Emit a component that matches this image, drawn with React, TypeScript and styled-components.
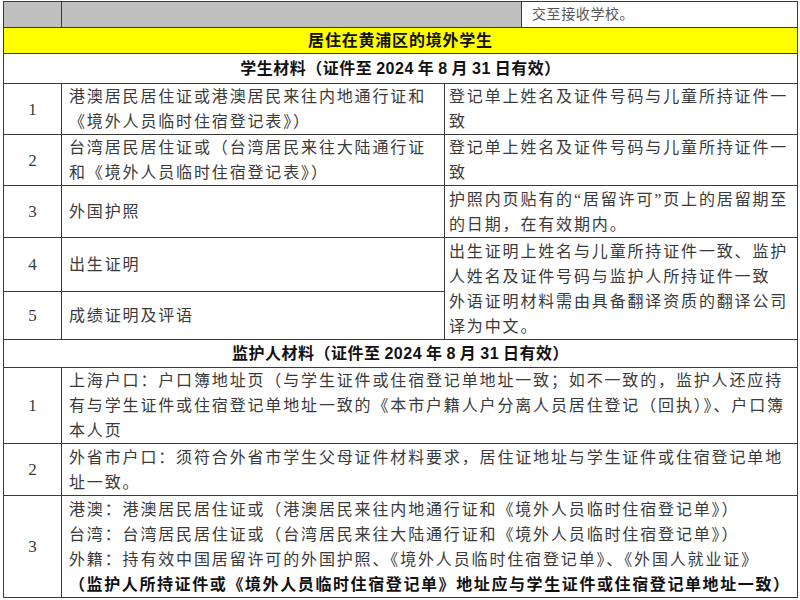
import React from "react";
import styled, { createGlobalStyle } from "styled-components";

const GlobalStyle = createGlobalStyle`
  html, body { margin: 0; padding: 0; background: #ffffff; }
  body { font-family: "Liberation Serif", "Noto Sans CJK SC", serif; }
`;

const Table = styled.table`
  border-collapse: collapse;
  table-layout: fixed;
  width: 794px;
  margin: 1px 0 0 3px;
  font-family: "Liberation Serif", "Noto Sans CJK SC", serif;
  font-size: 16px;
  color: #3a3a3a;
`;

const Row = styled.tr<{ $h: number }>`
  height: ${(p) => p.$h}px;
`;

const Cell = styled.td<{ $bg?: string; $pad?: string; $align?: string; $valign?: string }>`
  border: 1px solid #3a3a3a;
  background: ${(p) => p.$bg ?? "#ffffff"};
  padding: ${(p) => p.$pad ?? "0 4px 0 7px"};
  text-align: ${(p) => p.$align ?? "left"};
  vertical-align: ${(p) => p.$valign ?? "middle"};
  line-height: 25px;
  letter-spacing: 1.85px;
  white-space: nowrap;
  overflow: hidden;
`;

const NumCell = styled(Cell)`
  text-align: center;
  padding: 0;
  font-size: 17px;
  letter-spacing: 0;
`;

const NoteCell = styled(Cell)`
  font-size: 14px;
  letter-spacing: 0.6px;
  color: #555555;
  padding-left: 10px;
`;

const Heading = styled(Cell)<{ $yellow?: boolean }>`
  background: ${(p) => (p.$yellow ? "#ffff00" : "#ffffff")};
  text-align: center;
  font-family: "Liberation Sans", "Noto Sans CJK SC", sans-serif;
  font-weight: 700;
  color: #111111;
  letter-spacing: ${(p) => (p.$yellow ? "0.8px" : "0.5px")};
  word-spacing: ${(p) => (p.$yellow ? "0" : "-1px")};
  padding: 0;
`;

const Strong = styled.span`
  font-weight: 700;
  color: #111111;
  font-family: "Liberation Sans", "Noto Sans CJK SC", sans-serif;
  letter-spacing: 1.6px;
`;

const Lines = ({ lines }: { lines: string[] }) => (
  <>
    {lines.map((l, i) => (
      <React.Fragment key={i}>
        {i > 0 && <br />}
        {l}
      </React.Fragment>
    ))}
  </>
);

export default function App() {
  return (
    <>
      <GlobalStyle />
      <Table>
        <colgroup>
          <col style={{ width: 58 }} />
          <col style={{ width: 383 }} />
          <col style={{ width: 77 }} />
          <col style={{ width: 276 }} />
        </colgroup>
        <tbody>
          <Row $h={26}>
            <Cell $bg="#c0c0c0" />
            <Cell $bg="#c0c0c0" colSpan={2} />
            <NoteCell>交至接收学校。</NoteCell>
          </Row>
          <Row $h={26}>
            <Heading $yellow colSpan={4}>居住在黄浦区的境外学生</Heading>
          </Row>
          <Row $h={30}>
            <Heading colSpan={4}>学生材料（证件至 2024 年 8 月 31 日有效）</Heading>
          </Row>
          <Row $h={51}>
            <NumCell>1</NumCell>
            <Cell>
              <Lines lines={["港澳居民居住证或港澳居民来往内地通行证和", "《境外人员临时住宿登记表》）"]} />
            </Cell>
            <Cell colSpan={2} $pad="0 2px 0 4px">
              <Lines lines={["登记单上姓名及证件号码与儿童所持证件一", "致"]} />
            </Cell>
          </Row>
          <Row $h={51}>
            <NumCell>2</NumCell>
            <Cell>
              <Lines lines={["台湾居民居住证或（台湾居民来往大陆通行证", "和《境外人员临时住宿登记表》）"]} />
            </Cell>
            <Cell colSpan={2} $pad="0 2px 0 4px">
              <Lines lines={["登记单上姓名及证件号码与儿童所持证件一", "致"]} />
            </Cell>
          </Row>
          <Row $h={52}>
            <NumCell>3</NumCell>
            <Cell>外国护照</Cell>
            <Cell colSpan={2} $pad="0 2px 0 4px">
              <Lines lines={["护照内页贴有的“居留许可”页上的居留期至", "的日期，在有效期内。"]} />
            </Cell>
          </Row>
          <Row $h={54}>
            <NumCell>4</NumCell>
            <Cell>出生证明</Cell>
            <Cell colSpan={2} rowSpan={2} $pad="0 2px 0 4px">
              <Lines
                lines={[
                  "出生证明上姓名与儿童所持证件一致、监护",
                  "人姓名及证件号码与监护人所持证件一致",
                  "外语证明材料需由具备翻译资质的翻译公司",
                  "译为中文。",
                ]}
              />
            </Cell>
          </Row>
          <Row $h={48}>
            <NumCell>5</NumCell>
            <Cell>成绩证明及评语</Cell>
          </Row>
          <Row $h={28}>
            <Heading colSpan={4}>监护人材料（证件至 2024 年 8 月 31 日有效）</Heading>
          </Row>
          <Row $h={76}>
            <NumCell>1</NumCell>
            <Cell colSpan={3}>
              <Lines
                lines={[
                  "上海户口：户口簿地址页（与学生证件或住宿登记单地址一致；如不一致的，监护人还应持",
                  "有与学生证件或住宿登记单地址一致的《本市户籍人户分离人员居住登记（回执）》、户口簿",
                  "本人页",
                ]}
              />
            </Cell>
          </Row>
          <Row $h={52}>
            <NumCell>2</NumCell>
            <Cell colSpan={3}>
              <Lines
                lines={[
                  "外省市户口：须符合外省市学生父母证件材料要求，居住证地址与学生证件或住宿登记单地",
                  "址一致。",
                ]}
              />
            </Cell>
          </Row>
          <Row $h={102}>
            <NumCell>3</NumCell>
            <Cell colSpan={3}>
              港澳：港澳居民居住证或（港澳居民来往内地通行证和《境外人员临时住宿登记单》）
              <br />
              台湾：台湾居民居住证或（台湾居民来往大陆通行证和《境外人员临时住宿登记单》）
              <br />
              外籍：持有效中国居留许可的外国护照、《境外人员临时住宿登记单》、《外国人就业证》
              <br />
              <Strong>（监护人所持证件或《境外人员临时住宿登记单》地址应与学生证件或住宿登记单地址一致）</Strong>
            </Cell>
          </Row>
        </tbody>
      </Table>
    </>
  );
}
